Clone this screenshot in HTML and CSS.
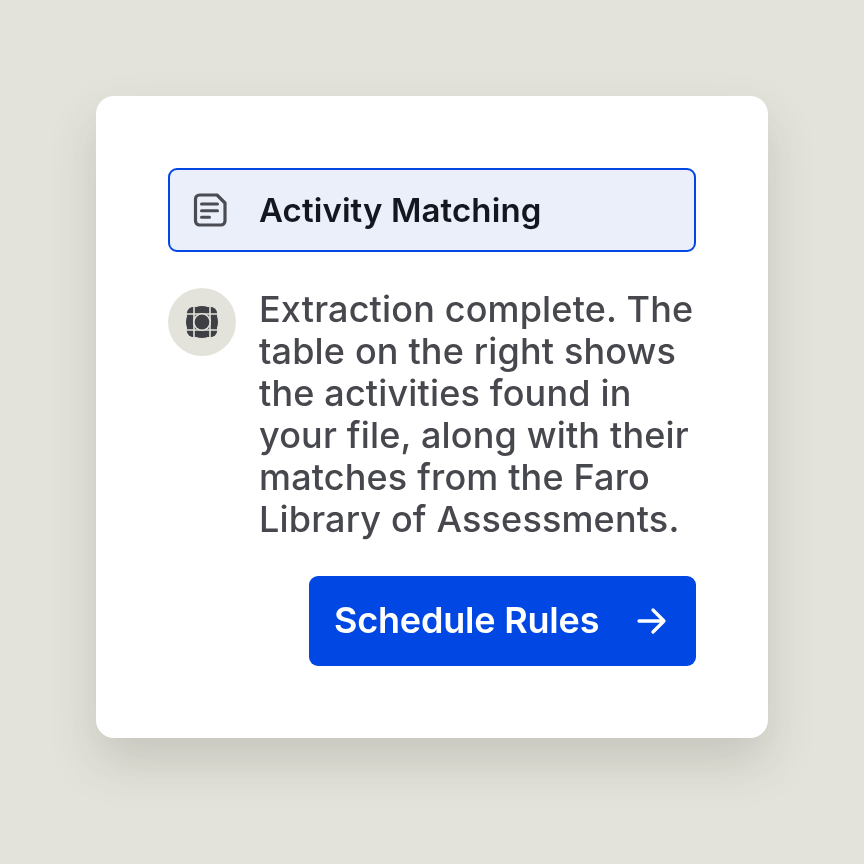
FILE: index.html
```html
<!DOCTYPE html>
<html lang="en">
<head>
<meta charset="utf-8">
<title>Activity Matching</title>
<link rel="stylesheet" href="styles.css">
</head>
<body>
<main class="card">
  <div class="file-row">
    <svg class="file-icon" viewBox="0 0 36 36" fill="none" aria-hidden="true">
      <path d="M7.5 3H25L33 11V29a4 4 0 0 1-4 4H7.5a4 4 0 0 1-4-4V7a4 4 0 0 1 4-4Z" stroke="#4b4c53" stroke-width="3.2" stroke-linejoin="round"/>
      <path d="M9.5 12h16M9.5 18.7h16M9.5 25.3h8" stroke="#4b4c53" stroke-width="3" stroke-linecap="round"/>
    </svg>
    <span class="file-name">Activity Matching</span>
  </div>
  <div class="message">
    <div class="avatar">
      <svg class="avatar-icon" viewBox="0 0 34 34" aria-hidden="true">
        <mask id="petals">
          <circle cx="17" cy="17" r="16" fill="#fff"/>
          <circle cx="9" cy="9" r="7.3" fill="#fff"/>
          <circle cx="25" cy="9" r="7.3" fill="#fff"/>
          <circle cx="9" cy="25" r="7.3" fill="#fff"/>
          <circle cx="25" cy="25" r="7.3" fill="#fff"/>
          <circle cx="17" cy="17" r="9" fill="#000"/>
          <path d="M9 0v34M25 0v34M0 9h34M0 25h34" stroke="#000" stroke-width="1.6"/>
        </mask>
        <rect width="34" height="34" fill="#3f4046" mask="url(#petals)"/>
        <circle cx="17" cy="17" r="7.4" fill="#3f4046"/>
      </svg>
    </div>
    <p class="message-text">Extraction complete. The table on the right shows the activities found in your file, along with their matches from the Faro Library of Assessments.</p>
  </div>
  <div class="actions">
    <button class="primary" type="button">
      <span class="primary-label">Schedule Rules</span>
      <svg class="arrow" viewBox="0 0 30 30" fill="none" aria-hidden="true">
        <path d="M2 15h25M16 4l11 11-11 11" stroke="#fff" stroke-width="3.3" stroke-linecap="round" stroke-linejoin="round"/>
      </svg>
    </button>
  </div>
</main>
</body>
</html>
```

FILE: styles.css
```css
* { box-sizing: border-box; }
html, body { height: 100%; }
body {
  margin: 0;
  background: #e3e3db;
  padding: 96px;
  font-family: Inter, "Noto Sans", sans-serif;
}
.card {
  width: 672px;
  height: 642px;
  padding: 72px;
  background: #fff;
  border-radius: 18px;
  box-shadow: 0 24px 48px rgba(60, 58, 48, 0.17);
  display: flex;
  flex-direction: column;
  will-change: transform;
}
.file-row {
  flex: none;
  height: 84px;
  display: flex;
  align-items: center;
  gap: 31px;
  padding-left: 22px;
  background: #eaeff9;
  border: 2px solid #0047e3;
  border-radius: 9px;
}
.file-icon { width: 36px; height: 36px; flex: none; }
.file-name {
  font-size: 33px;
  font-weight: 600;
  letter-spacing: 0.1px;
  color: #14171f;
}
.message {
  margin-top: 36px;
  display: flex;
  gap: 23px;
}
.avatar {
  width: 68px;
  height: 68px;
  flex: none;
  border-radius: 50%;
  background: #e3e3db;
  display: flex;
  align-items: center;
  justify-content: center;
}
.avatar-icon { width: 34px; height: 34px; }
.message-text {
  margin: 0;
  line-height: 42px;
  font-size: 36px;
  font-weight: 450;
  letter-spacing: 0.16px;
  color: #47484e;
}
.actions {
  flex: none;
  margin-top: 36px;
  display: flex;
  justify-content: flex-end;
}
.primary {
  width: 387px;
  height: 90px;
  padding: 0 29px 0 25px;
  display: flex;
  align-items: center;
  justify-content: space-between;
  background: #0047e3;
  border: 0;
  border-radius: 9px;
  color: #fff;
  font: 600 36px Inter, "Noto Sans", sans-serif;
  letter-spacing: -0.2px;
}
.primary-label { margin-bottom: 2px; }
.arrow { width: 30px; height: 30px; flex: none; }
```
